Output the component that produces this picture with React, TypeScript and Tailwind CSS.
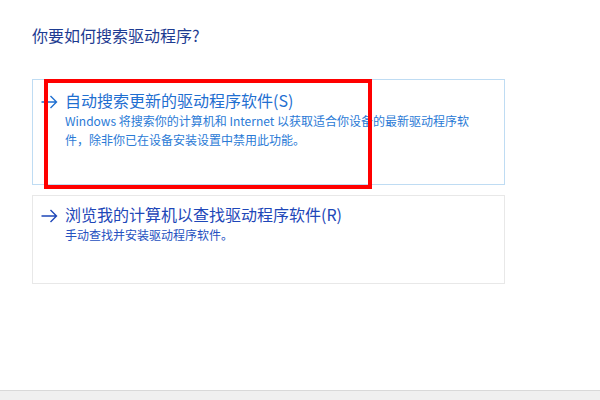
import React from "react";

const Arrow = ({ color }: { color: string }) => (
  <svg width="17" height="14" viewBox="0 0 17 14" className="shrink-0">
    <path d="M0.5 7 H15.5 M9.5 1 L15.5 7 L9.5 13" fill="none" stroke={color} strokeWidth="1.4" />
  </svg>
);

export default function App() {
  const font = { fontFamily: '"Noto Sans CJK SC", "Noto Sans", sans-serif' };
  return (
    <div className="w-[600px] h-[400px] bg-white flex flex-col relative overflow-hidden" style={font}>
      <div className="flex-1 flex flex-col pl-[32px] pt-[24px]">
        <div className="text-[16px] leading-[22px] text-[#1d3b91] h-[22px]">你要如何搜索驱动程序?</div>
        <div className="mt-[33px] flex flex-col gap-[10px] w-[473px]">
          <div className="h-[106px] border border-[#bfdcf3] pl-[8px] pt-[10px] flex">
            <div className="pt-[5px]"><Arrow color="#1f6fd1" /></div>
            <div className="ml-[7px] flex flex-col">
              <div className="text-[16px] leading-[21px] text-[#1f6fd1]">自动搜索更新的驱动程序软件(S)</div>
              <div className="text-[12px] leading-[19px] text-[#2a7ad6] whitespace-nowrap">
                <div>Windows 将搜索你的计算机和 Internet 以获取适合你设备的最新驱动程序软</div>
                <div>件，除非你已在设备安装设置中禁用此功能。</div>
              </div>
            </div>
          </div>
          <div className="h-[89px] border border-[#e8e8e8] pl-[8px] pt-[8px] flex">
            <div className="pt-[5px]"><Arrow color="#1e47b8" /></div>
            <div className="ml-[7px] flex flex-col">
              <div className="text-[16px] leading-[21px] text-[#1e47b8]">浏览我的计算机以查找驱动程序软件(R)</div>
              <div className="text-[12px] leading-[19px] text-[#2450c0]">手动查找并安装驱动程序软件。</div>
            </div>
          </div>
        </div>
      </div>
      <div className="h-[10px] bg-[#f0f0f0] border-t border-[#d9d9d9]" />
      <div className="absolute left-[44px] top-[79px] w-[328px] h-[110px] border-[4px] border-[#ff0000]" />
    </div>
  );
}
